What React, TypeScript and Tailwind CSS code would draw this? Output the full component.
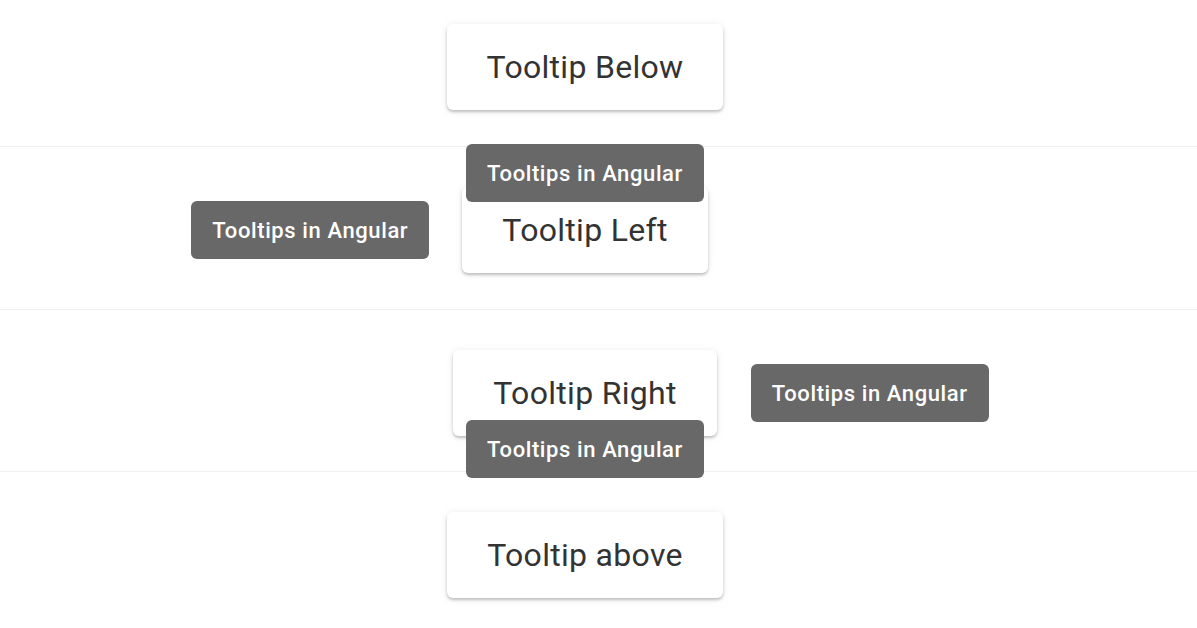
import React from "react";

const Tip: React.FC<{ className?: string }> = ({ className }) => {
  return (
    <div
      className={
        "absolute z-10 flex h-[58px] w-[238px] items-center justify-center rounded-[6px] bg-[#686868] text-[22px] font-medium tracking-[0.6px] whitespace-nowrap text-white " +
        (className ?? "")
      }
    >
      Tooltips in Angular
    </div>
  );
};

const Btn: React.FC<{ label: string; children?: React.ReactNode }> = ({ label, children }) => {
  return (
    <div className="relative">
      <button className="flex h-[86px] items-center rounded-[6px] bg-white px-[40px] text-[32px] tracking-[0.3px] text-[#333333] shadow-[0_2px_3px_rgba(0,0,0,0.22),0_1px_8px_rgba(0,0,0,0.08)]">
        {label}
      </button>
      {children}
    </div>
  );
};

export default function App() {
  return (
    <div className="h-[628px] w-full overflow-hidden bg-white font-['Roboto',sans-serif]">
      {/* below */}
      <section className="flex h-[147px] items-start justify-center border-b border-[#efefef] pt-[24px] pr-[27px]">
        <Btn label="Tooltip Below" />
      </section>

      {/* left */}
      <section className="flex h-[163px] items-start justify-center border-b border-[#efefef] pt-[40px] pr-[27px]">
        <Btn label="Tooltip Left">
          <Tip className="right-full top-1/2 mr-[33px] -translate-y-1/2" />
          <Tip className="left-1/2 bottom-[calc(100%-15px)] -translate-x-1/2" />
        </Btn>
      </section>

      {/* right */}
      <section className="flex h-[162px] items-start justify-center border-b border-[#efefef] pt-[40px] pr-[27px]">
        <Btn label="Tooltip Right">
          <Tip className="left-full top-1/2 ml-[34px] -translate-y-1/2" />
          <Tip className="left-1/2 top-[calc(100%-16px)] -translate-x-1/2" />
        </Btn>
      </section>

      {/* above */}
      <section className="flex h-[156px] items-start justify-center pt-[40px] pr-[27px]">
        <Btn label="Tooltip above" />
      </section>
    </div>
  );
}
